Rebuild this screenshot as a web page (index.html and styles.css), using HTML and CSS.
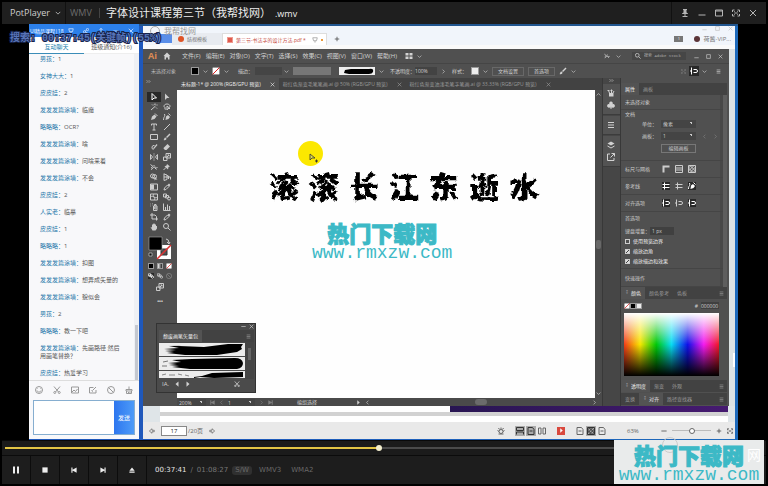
FILE: index.html
```html
<!DOCTYPE html>
<html lang="zh-CN">
<head>
<meta charset="utf-8">
<title>PotPlayer</title>
<link rel="stylesheet" href="styles.css">
</head>
<body>
<svg class="defs" aria-hidden="true">
  <filter id="rough" x="-5%" y="-10%" width="110%" height="120%"><feTurbulence type="fractalNoise" baseFrequency="0.18" numOctaves="2" seed="4"/><feDisplacementMap in="SourceGraphic" scale="5" xChannelSelector="R" yChannelSelector="G"/></filter>
  <symbol id="chev" viewBox="0 0 16 16"><path d="M2 5l6 6 6-6"/></symbol>
  <symbol id="right" viewBox="0 0 16 16"><path d="M5 2l6 6-6 6"/></symbol>
  <symbol id="left" viewBox="0 0 16 16"><path d="M11 2L5 8l6 6"/></symbol>
  <symbol id="close" viewBox="0 0 16 16"><path d="M2 2l12 12M14 2L2 14"/></symbol>
  <symbol id="min" viewBox="0 0 16 16"><path d="M1 12h14"/></symbol>
  <symbol id="mid" viewBox="0 0 16 16"><path d="M1 8h14"/></symbol>
  <symbol id="max" viewBox="0 0 16 16"><path d="M2 2h12v12H2z"/></symbol>
  <symbol id="win" viewBox="0 0 16 16"><path d="M1 2h14v12H1zM1 4h14"/></symbol>
  <symbol id="full" viewBox="0 0 16 16"><path d="M1 6V2h4M11 2h4v4M15 10v4h-4M5 14H1v-4M4 5l3 2M12 5L9 7M4 11l3-2M12 11L9 9"/></symbol>
  <symbol id="pin" viewBox="0 0 16 16"><path class="solid" d="M4 0h8v2h-1v5l3 2v1H2V9l3-2V2H4z"/><path d="M8 10v5M3 15h10"/></symbol>
  <symbol id="menu" viewBox="0 0 16 16"><path d="M2 3h12M2 8h12M2 13h12"/></symbol>
  <symbol id="dbl" viewBox="0 0 16 16"><path d="M2 4l4 4-4 4M9 4l4 4-4 4"/></symbol>
  <symbol id="plus" viewBox="0 0 16 16"><path d="M8 2v12M2 8h12"/></symbol>
  <symbol id="arrow-sel" viewBox="0 0 16 16"><path d="M4 1v13l4-4h5z"/></symbol>
  <symbol id="arrow-dir" viewBox="0 0 16 16"><path class="solid" d="M4 1v13l4-4h5z"/></symbol>
  <symbol id="wand" viewBox="0 0 16 16"><path d="M2 14L11 6M4 3l2 2M10 1v3M13 4h2M12 9l2 2M8 3l1 1"/></symbol>
  <symbol id="lasso" viewBox="0 0 16 16"><path d="M5 10C-1 7 3 2 8 2s9 5 3 8M5 10c-2 0-2 3 0 3M8 6v8l2-3h4z"/></symbol>
  <symbol id="pen" viewBox="0 0 16 16"><path class="solid" d="M2 14L4 7l5-4 4 4-4 5z"/><path d="M10 1l5 5"/></symbol>
  <symbol id="curve" viewBox="0 0 16 16"><path class="solid" d="M5 14l1-7 4-3 4 4-3 4z"/><path d="M1 14C1 6 5 9 3 2M11 1l4 4"/></symbol>
  <symbol id="type" viewBox="0 0 16 16"><path d="M3 5V2h10v3M8 2v12M5 14h6"/></symbol>
  <symbol id="line" viewBox="0 0 16 16"><path d="M2 14L14 2"/></symbol>
  <symbol id="rect" viewBox="0 0 16 16"><path d="M1 3h14v10H1z"/></symbol>
  <symbol id="brush" viewBox="0 0 16 16"><path class="solid" d="M1 14c2-1 1-5 4-5l2 2c0 3-3 4-6 3zM6 8l7-7 2 2-7 7z"/></symbol>
  <symbol id="shaper" viewBox="0 0 16 16"><path d="M7 13a4 4 0 1 1 2-8"/><path class="solid" d="M6 11l7-9 2 2-7 8z"/></symbol>
  <symbol id="eraser" viewBox="0 0 16 16"><path class="solid" d="M2 9l7-7 5 5-7 7H4L1 11z"/></symbol>
  <symbol id="mirror" viewBox="0 0 16 16"><path d="M8 1v2M8 5v2M8 9v2M8 13v2M1 3v10l4-5zM15 3v10l-4-5z"/></symbol>
  <symbol id="scale" viewBox="0 0 16 16"><path d="M6 1h9v9H6zM1 8h7v7H1zM8 8l4-4M9 4h3v3"/></symbol>
  <symbol id="width" viewBox="0 0 16 16"><path d="M1 3l5 4 3-3M2 13c4-1 4-5 7-5s3 3 6 1M5 8l-3 2M9 9l4 4"/></symbol>
  <symbol id="puppet" viewBox="0 0 16 16"><path class="solid" d="M8 2l6 5-3 1-1 5-7-6 4-2z"/><path d="M6 9l-5 5"/></symbol>
  <symbol id="shape" viewBox="0 0 16 16"><circle cx="5" cy="6" r="4"/><circle cx="9" cy="7" r="4"/><path class="solid" d="M9 7v8l2-2h4z"/></symbol>
  <symbol id="persp" viewBox="0 0 16 16"><path d="M2 1v14M2 2l6 2v9l-6 2M2 8h13v5M8 5l3 1v6"/></symbol>
  <symbol id="grad" viewBox="0 0 16 16"><path d="M1 2h14v12H1z"/><path class="solid" d="M2 3h6v10H2z"/></symbol>
  <symbol id="drop" viewBox="0 0 16 16"><path d="M2 14l1-4 6-6 3 3-6 6z"/><path class="solid" d="M9 4l3-3 3 3-3 3z"/></symbol>
  <symbol id="mesh" viewBox="0 0 16 16"><path d="M1 2h14v12H1zM1 8c5-5 9 5 14 0M8 2c-5 4 5 8 0 12"/></symbol>
  <symbol id="blend" viewBox="0 0 16 16"><path d="M1 2h6v6H1zM5 5h6v5H5z"/><circle cx="12" cy="11" r="3"/></symbol>
  <symbol id="spray" viewBox="0 0 16 16"><path d="M7 6h7v9H7zM9 6V3h3v3M1 2h1M4 1h1M4 4h1M1 6h1"/><circle cx="10.500" cy="10" r="2"/></symbol>
  <symbol id="chart" viewBox="0 0 16 16"><path d="M1 1v14h14M5 14V8M9 14V3M13 14V6"/></symbol>
  <symbol id="artb" viewBox="0 0 16 16"><path d="M4 0v12h12M0 4h10l3 3v8"/></symbol>
  <symbol id="hand" viewBox="0 0 16 16"><path class="solid" d="M5 15L1 8l3 1V3h2l1-2h2l1 2h2v3h2v5l-3 4z"/></symbol>
  <symbol id="mag" viewBox="0 0 16 16"><circle cx="6" cy="6" r="5"/><path d="M10 10l5 5"/></symbol>
  <symbol id="home" viewBox="0 0 16 16"><path class="solid" d="M8 1l7 7h-2v7h-3v-4H6v4H3V8H1z"/></symbol>
  <symbol id="tile" viewBox="0 0 16 16"><path class="solid" d="M1 2h6v5H1zM9 2h6v5H9zM1 9h6v5H1zM9 9h6v5H9z"/></symbol>
  <symbol id="club" viewBox="0 0 16 16"><path class="solid" d="M8 1a3.500 3.500 0 0 1 3 5.500A3.500 3.500 0 1 1 9 11l1 4H6l1-4a3.500 3.500 0 1 1-2-4.500A3.500 3.500 0 0 1 8 1z"/></symbol>
  <symbol id="bucket" viewBox="0 0 16 16"><path class="solid" d="M4 8h9v7H4z"/><path d="M5 8L3 3M9 8V1M12 8l2-4M1 3h4M7 3h4"/></symbol>
  <symbol id="layers" viewBox="0 0 16 16"><path class="solid" d="M8 1l7 4-7 4-7-4z"/><path d="M1 10l7 4 7-4"/></symbol>
  <symbol id="export" viewBox="0 0 16 16"><path d="M6 2H1v13h13v-5M9 1h6v6M15 1L7 9"/></symbol>
  <symbol id="corner" viewBox="0 0 16 16"><path class="solid" d="M1 1h14v4H5v10H1z"/></symbol>
  <symbol id="gridi" viewBox="0 0 16 16"><path d="M1 1h14v14H1zM1 6h14M1 10h14"/></symbol>
  <symbol id="trans" viewBox="0 0 16 16"><path d="M1 1h14v14H1zM1 6l5-5M1 12L12 1M4 15L15 4M10 15l5-5M4 1l11 11M1 6l9 9"/></symbol>
  <symbol id="guide" viewBox="0 0 16 16"><path d="M5 1v14M1 5h14M1 11h14"/></symbol>
  <symbol id="snap" viewBox="0 0 16 16"><path d="M3 1v14M7 5h5a3 3 0 0 1 0 6H7M0 8h3"/></symbol>
  <symbol id="smile" viewBox="0 0 16 16"><circle cx="8" cy="8" r="7"/><path d="M4 9c1 4 7 4 8 0M5 5v1M11 5v1"/></symbol>
  <symbol id="cut" viewBox="0 0 16 16"><path d="M2 1l9 11M14 1L5 12"/><circle cx="3.500" cy="13" r="2"/><circle cx="12.500" cy="13" r="2"/></symbol>
  <symbol id="pic" viewBox="0 0 16 16"><path d="M1 2h14v12H1zM2 12l4-4 3 3 4-5"/></symbol>
  <symbol id="note" viewBox="0 0 16 16"><path d="M9 3H1v11h13V8M7 9l7-7M5 9l3 2"/></symbol>
  <symbol id="ban" viewBox="0 0 16 16"><circle cx="8" cy="8" r="7"/><path d="M3 3l10 10"/></symbol>
  <symbol id="clean" viewBox="0 0 16 16"><path d="M8 1v5M2 7h12v3H2zM3 10v5h10v-5M7 15v-3M10 15v-3"/></symbol>
  <symbol id="share" viewBox="0 0 16 16"><circle cx="4" cy="10" r="3"/><circle cx="12" cy="4" r="3"/><path d="M6 8l4-3M7 11l6 3"/></symbol>
  <symbol id="up" viewBox="0 0 16 16"><path d="M8 12V1M4 5l4-4 4 4M1 9v5h14V9"/></symbol>
  <symbol id="headset" viewBox="0 0 16 16"><path d="M2 2h12l-2 8H4zM8 10v5"/></symbol>
  <symbol id="pause" viewBox="0 0 16 16"><path class="solid" d="M2 1h4v14H2zM10 1h4v14h-4z"/></symbol>
  <symbol id="stop" viewBox="0 0 16 16"><path class="solid" d="M1 1h14v14H1z"/></symbol>
  <symbol id="prev" viewBox="0 0 16 16"><path class="solid" d="M1 1h3v6l11-6v14L4 9v6H1z"/></symbol>
  <symbol id="next" viewBox="0 0 16 16"><path class="solid" d="M15 1h-3v6L1 1v14l11-6v6h3z"/></symbol>
  <symbol id="eject" viewBox="0 0 16 16"><path class="solid" d="M8 1l7 9H1zM1 12h14v3H1z"/></symbol>
  <symbol id="tril" viewBox="0 0 16 16"><path class="solid" d="M12 1v14L4 8z"/></symbol>
  <symbol id="trir" viewBox="0 0 16 16"><path class="solid" d="M4 1v14l8-7z"/></symbol>
  <symbol id="prevp" viewBox="0 0 16 16"><path d="M8 2L1 8l7 6v-4h6V6H8z"/></symbol>
  <symbol id="nextp" viewBox="0 0 16 16"><path d="M8 2l7 6-7 6v-4H2V6h6z"/></symbol>
  <symbol id="eye" viewBox="0 0 16 16"><circle cx="8" cy="9" r="4"/><path d="M1 7l3 2M15 7l-3 2M3 2l2 3M8 1v4M13 2l-2 3M3 14h10"/></symbol>
  <symbol id="page" viewBox="0 0 16 16"><path d="M2 1h9l3 4v10H2zM5 8h6"/></symbol>
  <symbol id="pages" viewBox="0 0 16 16"><path d="M1 2h5v12H1zM10 2h5v12h-5z"/></symbol>
  <symbol id="rows" viewBox="0 0 16 16"><path d="M1 7V1h14v6zM1 15v-5h14v5"/></symbol>
  <symbol id="slash" viewBox="0 0 16 16"><path class="paper" d="M0 0h16v16H0z"/><path class="red" d="M1 15L15 1"/></symbol>
</svg>

<div class="player">
  <header class="titlebar">
    <button class="app">PotPlayer <svg class="i6"><use href="#chev"/></svg></button>
    <span class="format">WMV</span>
    <h1>字体设计课程第三节（我帮找网）<small>.wmv</small></h1>
    <div class="win-buttons">
      <button aria-label="置顶"><svg class="i8"><use href="#pin"/></svg></button>
      <button aria-label="最小化"><svg class="i8"><use href="#min"/></svg></button>
      <button aria-label="窗口"><svg class="i8"><use href="#win"/></svg></button>
      <button aria-label="全屏"><svg class="i8"><use href="#full"/></svg></button>
      <button aria-label="关闭"><svg class="i8"><use href="#close"/></svg></button>
    </div>
  </header>

  <main class="video">
    <p class="osd">搜索: 00:37:45(关键帧)(55%)</p>
    <aside class="chat">
      <div class="chat-head"><span>UI精品课程|18</span>
        <svg class="i6"><use href="#headset"/></svg><svg class="i6"><use href="#share"/></svg><svg class="i6"><use href="#up"/></svg><svg class="i6"><use href="#mid"/></svg><svg class="i6"><use href="#close"/></svg></div>
      <nav class="chat-tabs"><a href="#chat" class="on">互动聊天</a><a href="#notice">班级通知(介16)</a></nav>
      <div class="messages" id="chat">
        <p><b>男孩：</b>1</p><p><b>女神大大：</b>1</p><p><b>皮皮娃：</b>2</p><p><b>发发发篇涂墙：</b>临魔</p><p><b>略略略：</b>OCR?</p><p><b>发发发篇涂墙：</b>啥</p><p><b>发发发篇涂墙：</b>问啥来着</p><p><b>发发发篇涂墙：</b>不会</p><p><b>皮皮娃：</b>2</p><p><b>人实老：</b>临摹</p><p><b>皮皮娃：</b>1</p><p><b>略略略：</b>1</p><p><b>发发发篇涂墙：</b>扣图</p><p><b>发发发篇涂墙：</b>想弄成矢量的</p><p><b>发发发篇涂墙：</b>貌似会</p><p><b>男孩：</b>2</p><p><b>略略略：</b>教一下吧</p><p><b>发发发篇涂墙：</b>先画路径 然后<br>用画笔替换？</p><p><b>皮皮娃：</b>热爱学习</p>
      </div>
      <div class="chat-tools"><svg class="i8"><use href="#smile"/></svg><svg class="i8"><use href="#cut"/></svg><svg class="i8"><use href="#pic"/></svg><svg class="i8"><use href="#note"/></svg><svg class="i8"><use href="#ban"/></svg><svg class="i8"><use href="#clean"/></svg></div>
      <form class="chat-form"><textarea aria-label="消息"></textarea><button type="button">发送</button></form>
    </aside>

    <section class="reader">
      <div class="reader-top">
        <div class="ghost"><i></i>我帮找网</div>
        <span class="home-tab"></span>
        <span class="rtab"><i class="dot"></i>结视模板</span>
        <span class="rtab on"><i class="pdf"></i>第三节-书法字的设计方法.pdf *<svg class="i6"><use href="#headset"/></svg><i class="star"></i></span>
        <svg class="i6 add"><use href="#plus"/></svg>
        <span class="account"><i class="badge">1</i><i class="avatar"></i>荷酱-VIP...</span>
        <span class="reader-win"><svg class="i4"><use href="#min"/></svg><svg class="i4"><use href="#max"/></svg><svg class="i4"><use href="#close"/></svg></span>
      </div>

      <div class="stage">
        <div class="ai">
          <div class="menubar">
            <b class="logo">Ai</b><svg class="i8 home"><use href="#home"/></svg>
            <nav><a href="#f">文件(F)</a><a href="#e">编辑(E)</a><a href="#o">对象(O)</a><a href="#t">文字(T)</a><a href="#s">选择(S)</a><a href="#c">效果(C)</a><a href="#v">视图(V)</a><a href="#w">窗口(W)</a><a href="#h">帮助(H)</a></nav>
            <svg class="i8 tile"><use href="#tile"/></svg><svg class="i4"><use href="#chev"/></svg>
            <span class="menu-right"><svg class="i6"><use href="#width"/></svg><svg class="i4"><use href="#chev"/></svg>
              <label class="stock"><svg class="i6"><use href="#mag"/></svg><input aria-label="搜索" value="搜索 Adobe Stock"></label>
              <span class="aiwin"><svg class="i4"><use href="#min"/></svg><svg class="i4"><use href="#max"/></svg><svg class="i4"><use href="#close"/></svg></span></span>
          </div>
          <div class="options">
            <span class="what">未选择对象</span>
            <i class="sw big black"></i><svg class="i4"><use href="#chev"/></svg><svg class="i8"><use href="#slash"/></svg><svg class="i4"><use href="#chev"/></svg>
            <label class="strokew">描边：<input value="" aria-label="描边粗细"><svg class="i4"><use href="#chev"/></svg></label>
            <i class="profile"></i>
            <svg class="brushbox" viewBox="0 0 36 8"><path d="M0 0h36v8H0z" fill="#eee"/><path d="M6 3l6-1h18q5-1 4 3-1 2-4 2l-20 0-5-1z"/></svg><svg class="i4"><use href="#chev"/></svg>
            <label class="opac">不透明度：<input value="100%"></label><svg class="i4"><use href="#right"/></svg>
            <span class="stylel">样式：</span><i class="sw big white"></i><svg class="i4"><use href="#chev"/></svg>
            <button>文档设置</button><button>首选项</button>
            <svg class="i8"><use href="#brush"/></svg><svg class="i4"><use href="#chev"/></svg>
            <span class="opt-right"><svg class="i4 faint"><use href="#full"/></svg><svg class="i8 pressed"><use href="#snap"/></svg><svg class="i4"><use href="#chev"/></svg><svg class="i4"><use href="#menu"/></svg></span>
          </div>
          <div class="work">
            <div class="tools">
              <svg class="i4 grip"><use href="#dbl"/></svg>
              <div class="toolgrid">
                <svg class="pressed"><use href="#arrow-sel"/></svg><svg><use href="#arrow-dir"/></svg><svg><use href="#wand"/></svg><svg><use href="#lasso"/></svg><svg><use href="#pen"/></svg><svg><use href="#curve"/></svg><svg><use href="#type"/></svg><svg><use href="#line"/></svg><svg><use href="#rect"/></svg><svg><use href="#brush"/></svg><svg><use href="#shaper"/></svg><svg><use href="#eraser"/></svg><svg><use href="#mirror"/></svg><svg><use href="#scale"/></svg><svg><use href="#width"/></svg><svg><use href="#puppet"/></svg><svg><use href="#shape"/></svg><svg><use href="#persp"/></svg><svg><use href="#grad"/></svg><svg><use href="#drop"/></svg><svg><use href="#mesh"/></svg><svg><use href="#blend"/></svg><svg><use href="#spray"/></svg><svg><use href="#chart"/></svg><svg><use href="#artb"/></svg><svg><use href="#drop"/></svg><svg><use href="#hand"/></svg><svg><use href="#mag"/></svg>
              </div>
              <svg class="fillstroke" viewBox="0 0 24 24"><path d="M9 9h14v14H9z" fill="#fff"/><path d="M13 13h6v6h-6z" fill="#535353" stroke="#333"/><path d="M9 23L23 9" stroke="#d33" stroke-width="1.500"/><path d="M1 1h13v13H1z" fill="#000" stroke="#aaa" stroke-width=".6"/><path d="M18 3q3 0 3 4M19 6l2 2 1-2" fill="none" stroke="#ccc"/><path d="M1 17h3v3H1z" fill="#111" stroke="#ddd" stroke-width=".6"/></svg>
              <div class="trio"><i class="sw black"></i><i class="sw fade"></i><svg class="i6"><use href="#slash"/></svg></div>
              <div class="trio"><svg class="i6 pressed"><use href="#blend"/></svg><svg class="i6"><use href="#blend"/></svg><svg class="i6 faint"><use href="#ban"/></svg></div>
              <svg class="i10"><use href="#scale"/></svg>
              <b class="dots">•••</b>
            </div>

            <div class="center">
              <div class="doctabs"><a href="#d1" class="on">未标题-1* @ 200% (RGB/GPU 预览)<svg class="i4"><use href="#close"/></svg></a><a href="#d2">粉红色渐变毛笔笔画.ai @ 50% (RGB/GPU 预览)<svg class="i4"><use href="#close"/></svg></a><a href="#d3">粉红色渐变油漆毛笔字笔画.ai @ 33.33% (RGB/GPU 预览)<svg class="i4"><use href="#close"/></svg></a></div>
              <div class="canvas">
                <i class="spot"></i>
                <svg class="cursor" viewBox="0 0 10 10"><path d="M1 1v6l2-2h3z" fill="#dd5" stroke="#333" stroke-width=".8"/><path d="M6 8h3M7.500 6.500v3" stroke="#333"/></svg>
                <p class="poem"><span>滚</span><span>滚</span><span>长</span><span>江</span><span>东</span><span>逝</span><span>水</span></p>
                <div class="mark"><strong>热门下载网</strong><span>www.rmxzw.com</span></div>
              </div>
              <div class="vscroll"><svg class="i4"><use href="#chev" class="flip"/></svg><i></i><svg class="i4"><use href="#chev"/></svg></div>
              <div class="aistatus"><select aria-label="缩放"><option>200%</option></select><svg class="i4 faint"><use href="#prev"/></svg><svg class="i4 faint"><use href="#left"/></svg><select aria-label="画板"><option>1</option></select><svg class="i4 faint"><use href="#right"/></svg><svg class="i4 faint"><use href="#next"/></svg><span>编组选择</span><svg class="i4 go"><use href="#trir"/></svg><svg class="i4"><use href="#left"/></svg><i></i><svg class="i4"><use href="#right"/></svg></div>
            </div>

            <div class="dock">
              <svg class="i4"><use href="#dbl"/></svg>
              <div><svg class="i8"><use href="#bucket"/></svg><svg class="i8"><use href="#club"/></svg></div>
              <div><svg class="i8"><use href="#menu"/></svg></div>
              <div><svg class="i8"><use href="#layers"/></svg><svg class="i8"><use href="#export"/></svg></div>
            </div>

            <div class="panels">
              <div class="ptabs props"><a href="#p" class="on">属性</a><a href="#a">画板</a></div>
              <div class="proplist">
                <section class="single">未选择对象</section>
                <section class="docset"><h2>文档</h2>
                  <div class="row"><label for="unit">单位：</label><select id="unit"><option>像素</option></select></div>
                  <div class="row"><label for="board">画板：</label><select id="board"><option>1</option></select><svg class="i4 faint"><use href="#left"/></svg><svg class="i4 faint"><use href="#right"/></svg></div>
                  <button>编辑画板</button></section>
                <section class="icons"><span>标尺与网格</span><svg><use href="#corner"/></svg><svg><use href="#gridi"/></svg><svg><use href="#trans"/></svg></section>
                <section class="icons"><span>参考线</span><svg class="pressed"><use href="#guide"/></svg><svg><use href="#guide"/></svg><svg class="pressed"><use href="#curve"/></svg></section>
                <section class="icons"><span>对齐选项</span><svg class="pressed"><use href="#snap"/></svg><svg><use href="#snap"/></svg><svg class="pressed"><use href="#snap"/></svg></section>
                <section class="prefs"><h2>首选项</h2>
                  <label>键盘增量：<input type="text" value="1 px"></label>
                  <label class="tick"><input type="checkbox">使用预览边界</label>
                  <label class="tick"><input type="checkbox" checked>缩放边角</label>
                  <label class="tick"><input type="checkbox" checked>缩放描边和效果</label></section>
                <section class="single quick">快速操作</section>
              </div>
              <div class="ptabs"><a href="#c1" class="on"><i class="updown">↕</i>颜色</a><a href="#c2">颜色参考</a><a href="#c3">色板</a><svg class="i4"><use href="#menu"/></svg></div>
              <div class="colour">
                <div class="hexrow"><svg class="i6"><use href="#slash"/></svg><i class="sw black"></i><i class="sw white"></i><label>#<input value="000000"></label></div>
                <div class="spectrum"></div>
              </div>
              <div class="ptabs"><a href="#t1" class="on"><i class="updown">↕</i>透明度</a><a href="#t2">渐变</a><a href="#t3">外观</a><svg class="i4"><use href="#menu"/></svg></div>
              <div class="ptabs"><a href="#x1">变换</a><a href="#x2" class="on"><i class="updown">↕</i>对齐</a><a href="#x3">路径查找器</a><svg class="i4"><use href="#menu"/></svg></div>
            </div>

            <div class="brushes">
              <div class="btitle"><svg class="i4"><use href="#mid"/></svg><svg class="i4"><use href="#close"/></svg></div>
              <div class="ptabs"><a href="#b" class="on">颓废画笔矢量包</a><svg class="i4"><use href="#menu"/></svg></div>
              <div class="blist">
                <svg viewBox="0 0 86 13"><path d="M8 2l12 1 25 1 24-3 15 0-2 3 1 2-5 3-20 3-32 0-18-2 7-1-9-1 11-1-12-1 15-1-10-2 12 0z"/></svg>
                <svg viewBox="0 0 86 13"><path d="M13 3l20-1 43-1q7 0 8 5 0 5-6 6l-47 0-18-2 7-1-10-1 8-1-9-1 13-1z"/><path d="M3 9l5 0M4 5l5-1" stroke="#777"/></svg>
                <svg viewBox="0 0 86 7"><path d="M35 6l8-1 10-3 31-1v5l-29 1-14-1-6 1z"/><path d="M3 4l4-1M10 4l6 0M19 3l4 1M26 4l4 1" stroke="#888"/></svg>
              </div>
              <div class="bscroll"><i></i></div>
              <div class="bfoot"><span>IA.</span><svg class="i6"><use href="#tril"/></svg><svg class="i6"><use href="#trir"/></svg><svg class="i6"><use href="#cut"/></svg></div>
            </div>
          </div>
        </div>
        <div class="rscroll"><i></i></div>
      </div>

      <div class="sheet"><i class="purple"></i></div>
      <footer class="reader-foot">
        <svg class="i6"><use href="#prevp"/></svg><input class="pageno" value="17" aria-label="页码"><span>/20页</span><svg class="i6"><use href="#nextp"/></svg>
        <span class="views"><svg class="i8"><use href="#eye"/></svg><span><svg class="i8 shade"><use href="#rows"/></svg><svg class="i8 shade"><use href="#page"/></svg><svg class="i8"><use href="#pages"/></svg></span><i class="playbox"><svg class="i4"><use href="#trir"/></svg></i><span><svg class="i8"><use href="#page"/></svg><svg class="i8 shade"><use href="#trans"/></svg><svg class="i8"><use href="#page"/></svg></span></span>
        <span class="zoomv">63%</span>
        <span class="zoomer"><svg class="i6"><use href="#mid"/></svg><input type="range" aria-label="缩放" value="50"><svg class="i6"><use href="#plus"/></svg><svg class="i6"><use href="#full"/></svg></span>
      </footer>
    </section>
  </main>

  <div class="seek"><input type="range" aria-label="进度" min="0" max="1000" value="493"></div>
  <footer class="controls">
    <button aria-label="暂停"><svg class="i8"><use href="#pause"/></svg></button>
    <button aria-label="停止"><svg class="i6"><use href="#stop"/></svg></button>
    <button aria-label="上一个"><svg class="i6"><use href="#prev"/></svg></button>
    <button aria-label="下一个"><svg class="i6"><use href="#next"/></svg></button>
    <button aria-label="弹出"><svg class="i6"><use href="#eject"/></svg></button>
    <p><time>00:37:41</time><span>/</span><span>01:08:27</span><b>S/W</b><em>WMV3</em><em>WMA2</em></p>
  </footer>
  <div class="stamp"><i></i><div class="mark"><strong>热门下载网</strong><span>www.rmxzw.com</span></div><b>网</b></div>
</div>
</body>
</html>
```
FILE: styles.css
```css
* { box-sizing: border-box; }
body, p, h1, h2 { margin: 0; font-size: inherit; font-weight: inherit; }
body { background: #000; font: 6px/8px "Open Sans", "Noto Sans CJK SC", sans-serif; }
a { color: inherit; text-decoration: none; }
i, em { font-style: normal; }
button, input, select, textarea { appearance: none; margin: 0; padding: 0; border: 0; border-radius: 0; background: none; color: inherit; font: inherit; min-width: 0; outline: 0; }
svg { flex: none; display: block; }
symbol { fill: none; stroke: currentColor; stroke-width: 2; overflow: visible; }
symbol .solid { fill: currentColor; stroke: none; }
symbol .paper { fill: #fff; stroke: #333; }
symbol .red { stroke: #d22; }
.defs { position: absolute; width: 0; height: 0; }
.i4 { width: 5px; height: 5px; }
.i6 { width: 6px; height: 6px; }
.i8 { width: 8px; height: 8px; }
.i10 { width: 10px; height: 8px; }
.faint { opacity: .4; }
.pressed { background: #282828; color: #fff; }

.player { position: relative; display: flex; flex-direction: column; min-height: 100vh; padding: 2px; }

/* Title bar */
.titlebar { display: flex; align-items: center; height: 22px; background: #1f1f1f; color: #d0d0d0; font-size: 10px; line-height: 14px; }
.app { display: flex; align-items: center; gap: 5px; width: 64px; padding-left: 8px; height: 22px; border-right: 1px solid #111; font: 9px/14px "Open Sans", sans-serif; }
.format { width: 34px; padding-left: 4px; color: #6c6c6c; border-right: 1px solid #444; font-size: 9px; line-height: 10px; }
h1 { flex: 1; padding-left: 6px; font: 11px/16px "Open Sans", "Noto Sans CJK SC", sans-serif; color: #eee; }
h1 small { font-size: 9px; margin-left: 4px; }
.win-buttons { display: flex; gap: 9px; height: 22px; padding: 0 9px; align-items: center; border-left: 1px solid #111; color: #b5b5b5; }

/* Video frame */
.video { position: relative; flex: 1; display: grid; grid-template-columns: 110px 1fr; column-gap: 4px; margin: 0 28px 0 27px; padding: 0 3px 1px 0; background: linear-gradient(#22568f, #22568f) 0 0 / 100% 2px no-repeat, linear-gradient(90deg, #1f58bb 0 114px, #1d69ba); }
.osd { position: absolute; z-index: 5; left: -19px; top: 8px; font: bold 10px/13px "Liberation Mono", "Noto Sans CJK SC", monospace; color: #5874b8; white-space: nowrap; -webkit-text-stroke: 2px #17234a; paint-order: stroke fill; }

/* Chat */
.chat { display: flex; flex-direction: column; background: #f8f8fa; color: #555; }
.chat-head { display: flex; align-items: center; gap: 9px; height: 13px; padding: 0 5px 0 1px; background: #2c80ea; color: #dbeaff; white-space: nowrap; }
.chat-head span { flex: 1; color: #fff; font-size: 5px; }
.chat-head svg:first-of-type { margin-left: -5px; }
.chat-tabs { display: flex; height: 17px; line-height: 20px; text-align: center; background: #fff; }
.chat-tabs a { flex: 1; border-bottom: 1px solid #eee; }
.chat-tabs .on { color: #2382b0; border-color: #3b8db8; }
.messages { flex: 1; display: flex; flex-direction: column; gap: 9px; padding: 1px 0 0 11px; background: linear-gradient(#c4c8d0, #c4c8d0) 106px 100% / 3px 55px no-repeat, linear-gradient(90deg, transparent 105px, #eef0f4 105px); }
.messages b { font-weight: 400; color: #2879aa; }
.chat-tools { display: flex; justify-content: space-between; align-items: center; height: 18px; padding: 0 6px; border-top: 1px solid #ddd; color: #999; }
.chat-form { display: flex; height: 35px; margin: 2px 4px 4px; border: 1px solid #86aed0; background: #fff; }
.chat-form textarea { flex: 1; resize: none; }
.chat-form button { width: 20px; background: linear-gradient(90deg, #2d76ef, #4d9bf8); color: #fff; text-align: center; }

/* Document reader */
.reader { display: grid; grid-template-rows: 23px 1fr 16px 17px; margin-top: 2px; background: #dfe5e8; min-width: 0; }
.reader-top { position: relative; display: flex; align-items: flex-end; padding: 0 4px 4px 12px; background: linear-gradient(#f1f5fb 19px, #fafafa 19px); color: #777; white-space: nowrap; }
.ghost { position: absolute; left: 7px; top: 0; display: flex; gap: 4px; color: #999; font-size: 8px; line-height: 10px; }
.ghost i { width: 10px; height: 10px; border: 1px solid #aaa; border-radius: 50%; }
.home-tab { width: 17px; height: 9px; margin-bottom: 2px; background: #5a8ee8; }
.rtab { display: flex; align-items: center; gap: 3px; width: 50px; height: 12px; padding-left: 6px; background: #e8ebf0; font-size: 5px; }
.rtab.on { width: 105px; padding-left: 4px; background: #fff; color: #c3463d; border: solid #ddd; border-width: 1px 1px 0; }
.rtab svg { color: #999; margin-left: 3px; }
.dot { width: 6px; height: 6px; border-radius: 50%; background: #df5426; }
.pdf { width: 6px; height: 6px; background: #df5a4d; border: 1px solid #ee9a8f; }
.star { width: 2px; height: 2px; background: #e99a3c; }
.add { margin: 0 0 3px 7px; color: #444; }
.account { display: flex; align-items: center; gap: 6px; height: 12px; margin-left: auto; font-size: 6px; }
.badge { width: 9px; height: 6px; background: #777; color: #fff; font-size: 4px; line-height: 6px; text-align: center; margin-right: 5px; }
.avatar { width: 6px; height: 6px; border-radius: 50%; background: #5b3438; margin-right: -3px; }
.reader-win { position: absolute; top: 0; right: 2px; display: flex; gap: 8px; color: #bbb; }
.stage { display: grid; grid-template-columns: 1fr 6px; min-height: 0; }
.rscroll { display: flex; align-items: flex-end; padding: 0 0 39px 4px; background: #dce2e4; }
.rscroll i { width: 2px; height: 14px; background: #fff; }
.sheet { margin: 0 7px 0 17px; background: linear-gradient(#fff 6px, #d2d2d2 6px 10px, #fff 10px); }
.purple { display: block; width: 49%; height: 6px; margin-left: auto; background: linear-gradient(90deg, #281552, #461a70); }
.reader-foot { display: flex; align-items: center; gap: 6px; padding: 0 2px 0 6px; background: #e9e9e9; color: #666; }
.pageno { width: 26px; height: 10px; border: 1px solid #888; background: #fff; text-align: center; color: #222; }
.reader-foot > span:nth-of-type(1) { margin-left: -5px; }
.views, .views span { display: flex; align-items: center; }
.views { gap: 11px; margin-left: auto; }
.views span { gap: 3px; }
.shade { background: #aaa; outline: 1px solid #aaa; color: #333; }
.playbox { display: grid; place-items: center; width: 8px; height: 8px; background: #d9493e; color: #fff; }
.zoomv { width: 33px; padding-left: 15px; }
.zoomer { display: flex; align-items: center; gap: 5px; margin-left: 10px; color: #444; }
.zoomer input { width: 39px; height: 6px; background: linear-gradient(#bbb, #bbb) 0 50% / 100% 1px no-repeat; }
.zoomer input::-webkit-slider-thumb { appearance: none; width: 6px; height: 6px; border: 1px solid #666; border-radius: 50%; background: #fff; }

/* Illustrator */
.ai { display: flex; flex-direction: column; min-width: 0; background: #434343; color: #d2d2d2; white-space: nowrap; }
.menubar, .options { display: flex; align-items: center; background: #505050; }
.menubar { height: 15px; border-bottom: 1px solid #454545; padding-left: 5px; }
.logo { width: 15px; color: #db8a54; font: bold 9px/10px "Open Sans", sans-serif; }
.menubar nav { display: flex; gap: 5px; margin: 0 8px 0 11px; }
.tile { margin-right: 4px; }
.menu-right { display: flex; align-items: center; gap: 6px; margin-left: auto; padding-right: 6px; }
.aiwin { display: flex; gap: 7px; }
.stock { display: flex; gap: 3px; width: 54px; margin: 0 2px 0 5px; padding-left: 3px; background: #464646; align-items: center; }
.stock input { width: 42px; font: 4px/8px "Liberation Mono", "Noto Sans CJK SC", monospace; color: #aaa; }
.options { height: 14px; gap: 4px; padding: 0 8px; font-size: 5px; }
.what { width: 36px; color: #bbb; }
.sw { width: 6px; height: 6px; border: 1px solid #999; }
.big { width: 8px; height: 8px; }
.black { background: #000; }
.white { background: #eee; }
.fade { background: linear-gradient(90deg, #eee, #222); }
.strokew { display: flex; align-items: center; gap: 2px; margin-left: 5px; }
.strokew input { width: 27px; height: 8px; background: #454545; }
.profile { width: 38px; height: 8px; margin: 0 4px 0 0; background: #777; }
.brushbox { width: 36px; height: 8px; }
.opac { display: flex; margin-left: 2px; font-size: 5px; }
.opac input { width: 22px; background: #434343; font-size: 5px; }
.stylel { margin-left: 2px; }
.options button { height: 9px; padding: 0 5px; border: 1px solid #686868; line-height: 7px; }
.opt-right { display: flex; align-items: center; gap: 4px; margin-left: auto; }
.opt-right .pressed { outline: 1px solid #282828; }
.opt-right svg:last-child { margin-left: 5px; }

.work { position: relative; flex: 1; display: grid; grid-template-columns: 33px 1fr 17px 108px; column-gap: 1px; min-height: 0; background: #383838; }
.tools { display: flex; flex-direction: column; align-items: center; background: #505050; color: #ccc; margin-right: -1px; }
.grip { align-self: flex-start; margin: 1px 0 9px 3px; }
.toolgrid { display: grid; grid-template-columns: 12px 12px; grid-auto-rows: 8px; gap: 2px 1px; }
.toolgrid svg { width: 12px; height: 8px; }
.toolgrid .pressed { outline: 1px solid #282828; }
.fillstroke { width: 24px; height: 24px; margin: 5px 0 3px; }
.trio { display: flex; gap: 3px; margin-bottom: 4px; }
.dots { font: bold 5px/6px "Open Sans", sans-serif; margin-top: 7px; }

.center { display: grid; grid-template: 12px 1fr 8px / 1fr 7px; min-width: 0; }
.doctabs { grid-column: 1 / 3; display: flex; background: #424242; color: #999; font-size: 5px; line-height: 12px; overflow: hidden; }
.doctabs a { display: flex; align-items: center; gap: 9px; padding: 0 4px; }
.doctabs .on { background: #505050; color: #eee; }
.canvas { position: relative; background: #fefefe; }
.spot { position: absolute; left: 121px; top: 51px; width: 25px; height: 25px; border-radius: 50%; background: #fce800; }
.cursor { position: absolute; left: 132px; top: 63px; width: 10px; height: 10px; }
.poem { position: absolute; left: 92px; top: 75px; display: flex; gap: 10px; font: 900 30px/40px "Noto Sans CJK SC", sans-serif; color: #000; filter: url(#rough); }
.mark { display: flex; flex-direction: column; align-items: center; gap: 2px; color: #3cb9c6; }
.mark strong { font: 900 22px/24px "Noto Sans CJK SC", sans-serif; -webkit-text-stroke: 1px #3cb9c6; }
.mark span { font: 18px/14px "Liberation Mono", monospace; }
.canvas .mark { position: absolute; left: 135px; top: 130px; }
.vscroll { display: flex; flex-direction: column; align-items: center; justify-content: space-between; background: #4a4a4a; padding: 2px 0; }
.vscroll i { width: 5px; height: 9px; border-radius: 2px; background: #686868; }
.flip { transform: rotate(180deg); transform-origin: center; }
.aistatus { grid-column: 1 / 3; display: flex; align-items: center; gap: 4px; padding: 0 5px 0 2px; background: #4a4a4a; font-size: 5px; }
select { background: linear-gradient(45deg, transparent 50%, #ccc 50%) calc(100% - 4px) 2px / 2px 2px no-repeat, #444; }
.aistatus select { width: 27px; height: 7px; }
.aistatus span { width: 55px; margin-left: 20px; }
.aistatus i { width: 12px; height: 6px; border-radius: 3px; background: #6b6b6b; margin: 0 auto; }

.dock { background: #464646; display: flex; flex-direction: column; align-items: center; gap: 1px; }
.dock div { display: flex; flex-direction: column; gap: 4px; width: 17px; padding: 5px 4px; background: #535353; border-bottom: 1px solid #3c3c3c; }

.panels { display: flex; flex-direction: column; background: #505050; font-size: 5px; padding-right: 2px; }
.ptabs { display: flex; align-items: center; height: 12px; margin-bottom: 1px; background: #424242; color: #999; line-height: 12px; font-size: 5px; }
.ptabs a { display: flex; gap: 2px; padding: 0 4px; }
.updown { color: #aaa; font-size: 4px; }
.ptabs .on { background: #535353; color: #eee; }
.ptabs svg { margin: 0 3px 0 auto; color: #999; }
.props { margin: 5px 0 0; }
.proplist { border-right: 4px solid #5e5e5e; background: #505050; box-shadow: inset -3px 0 #484848; }
.proplist section { padding: 0 4px; border-bottom: 1px solid #454545; color: #ccc; }
.proplist section.single { height: 15px; line-height: 15px; }
.proplist section.quick { height: 18px; line-height: 18px; }
.docset { height: 51px; }
.docset .row { display: flex; align-items: center; height: 12px; gap: 6px; }
.row label { width: 32px; text-align: right; margin-right: -2px; }
.row select { width: 35px; height: 8px; padding-left: 2px; }
.docset button { display: block; width: 35px; height: 9px; margin: 2px 0 0 36px; border: 1px solid #777; line-height: 7px; }
.proplist section.icons { display: flex; align-items: center; gap: 5px; height: 17px; }
.icons span { width: 32px; }
.icons svg { width: 8px; height: 8px; }
.prefs { height: 57px; padding-top: 2px !important; }
.prefs label { display: flex; align-items: center; height: 10px; }
.prefs h2 { height: 12px; }
.prefs [type=text] { width: 24px; height: 8px; background: #404040; padding-left: 2px; }
.prefs label.tick { gap: 3px; color: #eee; }
.tick input { width: 5px; height: 5px; border: 1px solid #ccc; }
.tick input:checked { background: linear-gradient(135deg, #ddd 40%, #444 40% 60%, #ddd 60%); }
.colour { flex: 1; display: flex; flex-direction: column; gap: 3px; padding: 2px 8px 4px 3px; }
.hexrow { display: flex; align-items: center; height: 8px; }
.hexrow label { display: flex; gap: 3px; margin-left: auto; }
.hexrow input { width: 18px; height: 7px; background: #404040; }
.spectrum { flex: 1; background: linear-gradient(#fff, transparent 50%, #000), linear-gradient(90deg, #f33a18, #f7e600 17%, #00c808 34%, #08dcf2 50%, #1010e8 67%, #f41cf0 84%, #f01824); }

.brushes { position: absolute; left: 14px; top: 246px; width: 98px; display: grid; grid-template-columns: 1fr 9px; background: #4b4b4b; outline: 1px solid #333; padding: 0 1px 3px 2px; }
.btitle { grid-column: 1 / 3; display: flex; justify-content: flex-end; gap: 3px; height: 6px; }
.brushes .ptabs { grid-column: 1 / 3; margin: 0; }
.blist { display: flex; flex-direction: column; gap: 1px; padding: 1px 0; }
.blist svg { width: 100%; background: #ececec; }
.bscroll { padding: 6px 3px; background: #454545; }
.bscroll i { display: block; height: 12px; background: #666; }
.bfoot { grid-column: 1 / 3; display: flex; align-items: center; gap: 5px; height: 10px; padding: 0 14px 0 3px; }
.bfoot svg:last-child { margin-left: auto; }

/* Player controls */
.seek { height: 16px; border-top: 1px solid #090909; border-bottom: 1px solid #0b0b0b; background: #1b1b1b; padding: 3px 2px 0 3px; }
.seek input { display: block; width: 100%; height: 8px; background: linear-gradient(90deg, #e3c545 49%, #4a4a4a 49%) 0 50% / 100% 2px no-repeat; }
.seek input::-webkit-slider-thumb { appearance: none; width: 6px; height: 6px; border-radius: 50%; background: #f4efcf; }
.controls { display: flex; height: 28px; background: #1d1d1d; color: #eee; }
.controls button { display: grid; place-items: center; width: 29px; border-right: 1px solid #0c0c0c; }
.controls p { display: flex; align-items: center; gap: 4px; padding-left: 8px; font: 7px/9px "DejaVu Sans", sans-serif; color: #777; }
.controls time { color: #e5e5e5; }
.controls b, .controls em { padding: 0 3px; border-radius: 3px; background: #303030; color: #696969; font-weight: 400; }
.controls em { background: none; }

.stamp { position: absolute; right: 4px; bottom: 2px; display: flex; justify-content: center; width: 150px; height: 44px; padding-top: 2px; background: #e9ebeb; }
.stamp .mark { position: relative; }
.stamp i { position: absolute; left: 48px; top: -3px; width: 16px; height: 16px; border: 1px solid #ccc; border-radius: 50%; }
.stamp b { position: absolute; right: 3px; top: 6px; font: 14px/16px "Noto Sans CJK SC", sans-serif; color: #fff; }
```
